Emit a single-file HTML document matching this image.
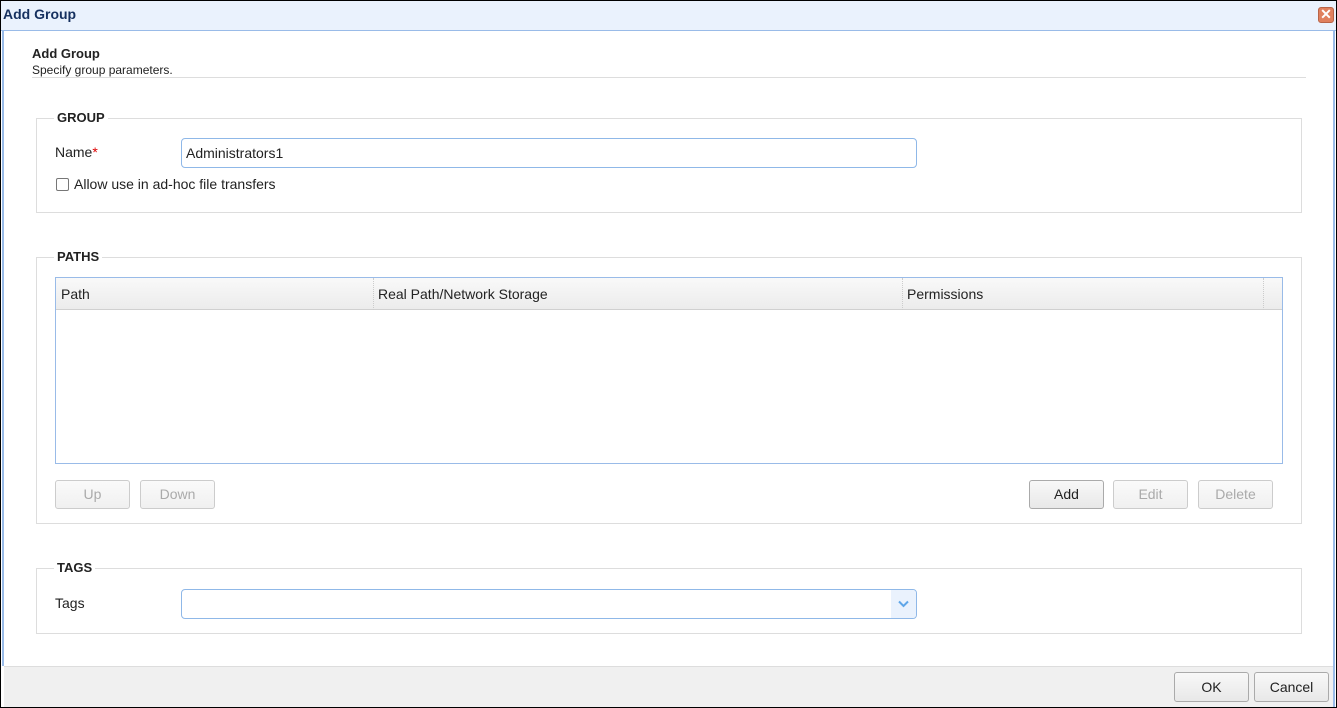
<!DOCTYPE html>
<html><head><meta charset="utf-8"><style>
*{box-sizing:border-box;margin:0;padding:0}
body{width:1337px;height:708px;overflow:hidden;background:#fff;font-family:"Liberation Sans",Arial,sans-serif;font-size:14px;color:#222;position:relative}
.a{position:absolute}
.frame{left:0;top:0;width:1337px;height:708px;border:1px solid #000}
.title{left:1px;top:1px;width:1335px;height:30px;background:#eaf2fd;border-bottom:1px solid #99bbe8}
.fs{position:absolute;border:1px solid #ddd}
.lg{position:absolute;background:#fff;font-weight:bold;font-size:13px;padding:0 3px;color:#222}
.btn{position:absolute;height:29px;width:75px;border:1px solid #ccc;border-radius:3px;background:linear-gradient(#fafafa,#f0f0f0);color:#aaa;font-size:14px;text-align:center;line-height:27px}
.btn.on{border-color:#aaa;color:#222;background:linear-gradient(#f8f8f8,#e8e8e8)}
.inp{position:absolute;border:1px solid #8fb8e8;border-radius:4px;background:#fff}
</style></head><body>
<div class="a frame"></div>
<div class="a title"></div>
<div class="a" style="left:3px;top:6px;font-weight:bold;font-size:14px;color:#15305f">Add Group</div>
<div class="a" style="left:1318px;top:7px;width:16px;height:16px;background:#e0805e;border:1px solid #b86448;border-radius:3px;color:#fff;font-weight:bold;font-size:14px;line-height:13px;text-align:center">✕</div>
<div class="a" style="left:2px;top:31px;width:2px;height:635px;background:#99bbe8"></div>
<div class="a" style="left:1333px;top:31px;width:2px;height:676px;background:#99bbe8"></div>
<div class="a" style="left:32px;top:46px;font-weight:bold;font-size:13px">Add Group</div>
<div class="a" style="left:32px;top:63px;font-size:12px">Specify group parameters.</div>
<div class="a" style="left:32px;top:77px;width:1274px;height:1px;background:#ddd"></div>

<div class="fs" style="left:36px;top:118px;width:1266px;height:95px"></div>
<div class="lg" style="left:54px;top:110px">GROUP</div>
<div class="a" style="left:55px;top:144px">Name<span style="color:#d00">*</span></div>
<div class="inp" style="left:181px;top:138px;width:736px;height:30px"></div>
<div class="a" style="left:186px;top:145px">Administrators1</div>
<div class="a" style="left:56px;top:178px;width:13px;height:13px;border:1px solid #777;border-radius:2px"></div>
<div class="a" style="left:74px;top:176px">Allow use in ad-hoc file transfers</div>

<div class="fs" style="left:36px;top:257px;width:1266px;height:267px"></div>
<div class="lg" style="left:54px;top:249px">PATHS</div>
<div class="a" style="left:55px;top:277px;width:1228px;height:187px;border:1px solid #99bbe8"></div>
<div class="a" style="left:56px;top:278px;width:1226px;height:32px;background:linear-gradient(#f9f9f9,#ececec);border-bottom:1px solid #d0d0d0"></div>
<div class="a" style="left:373px;top:278px;width:1px;height:32px;border-left:1px dotted #ccc"></div>
<div class="a" style="left:902px;top:278px;width:1px;height:32px;border-left:1px dotted #ccc"></div>
<div class="a" style="left:1263px;top:278px;width:1px;height:32px;border-left:1px dotted #ccc"></div>
<div class="a" style="left:61px;top:286px">Path</div>
<div class="a" style="left:378px;top:286px">Real Path/Network Storage</div>
<div class="a" style="left:907px;top:286px">Permissions</div>
<div class="btn" style="left:55px;top:480px">Up</div>
<div class="btn" style="left:140px;top:480px">Down</div>
<div class="btn on" style="left:1029px;top:480px">Add</div>
<div class="btn" style="left:1113px;top:480px">Edit</div>
<div class="btn" style="left:1198px;top:480px">Delete</div>

<div class="fs" style="left:36px;top:568px;width:1266px;height:66px"></div>
<div class="lg" style="left:54px;top:560px">TAGS</div>
<div class="a" style="left:55px;top:595px">Tags</div>
<div class="inp" style="left:181px;top:589px;width:736px;height:30px;overflow:hidden"><div class="a" style="right:0;top:0;width:25px;height:28px;background:#eaf2fd"></div>
<svg class="a" style="right:7px;top:10px" width="11" height="8" viewBox="0 0 11 8"><path d="M1 1.5L5.5 6L10 1.5" stroke="#5fa6e8" stroke-width="2" fill="none"/></svg></div>

<div class="a" style="left:4px;top:666px;width:1329px;height:41px;background:#f0f0f0;border-top:1px solid #ddd"></div>
<div class="btn on" style="left:1174px;top:672px;height:30px;line-height:28px">OK</div>
<div class="btn on" style="left:1254px;top:672px;height:30px;line-height:28px">Cancel</div>
</body></html>
